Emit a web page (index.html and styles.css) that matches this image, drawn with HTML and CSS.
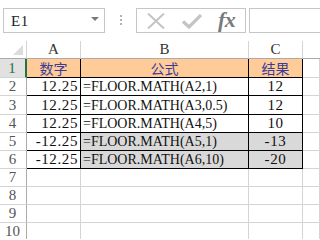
FILE: index.html
```html
<!DOCTYPE html>
<html lang="zh">
<head>
<meta charset="utf-8">
<link rel="stylesheet" href="styles.css">
</head>
<body>
<div class="toolbar">
  <div class="namebox"><span class="nb-text">E1</span><span class="caret"></span></div>
  <div class="dots"><i></i><i></i><i></i></div>
  <div class="fxbox">
    <svg class="ico-x" width="18" height="16" viewBox="0 0 18 16"><path d="M1 0.5 L17 15.5 M17 0.5 L1 15.5" stroke="#c4c4c4" stroke-width="2" fill="none"/></svg>
    <svg class="ico-check" width="20" height="15" viewBox="0 0 20 15"><path d="M1 7.5 L7 13 L19 1" stroke="#c4c4c4" stroke-width="3.2" fill="none"/></svg>
    <span class="fx">fx</span>
  </div>
  <div class="formula"></div>
</div>
<div class="sheet">
  <div class="corner"><span class="tri"></span></div>
  <div class="ch">A</div>
  <div class="ch">B</div>
  <div class="ch">C</div>
  <div class="ch last"></div>

  <div class="rh sel">1</div>
  <div class="d head">数字</div>
  <div class="d head">公式</div>
  <div class="d head">结果</div>
  <div class="e"></div>

  <div class="rh">2</div>
  <div class="d num">12.25</div>
  <div class="d fm">=FLOOR.MATH(A2,1)</div>
  <div class="d ctr">12</div>
  <div class="e"></div>

  <div class="rh">3</div>
  <div class="d num">12.25</div>
  <div class="d fm">=FLOOR.MATH(A3,0.5)</div>
  <div class="d ctr">12</div>
  <div class="e"></div>

  <div class="rh">4</div>
  <div class="d num">12.25</div>
  <div class="d fm">=FLOOR.MATH(A4,5)</div>
  <div class="d ctr">10</div>
  <div class="e"></div>

  <div class="rh">5</div>
  <div class="d num">-12.25</div>
  <div class="d fm gray">=FLOOR.MATH(A5,1)</div>
  <div class="d ctr gray">-13</div>
  <div class="e"></div>

  <div class="rh">6</div>
  <div class="d num">-12.25</div>
  <div class="d fm gray">=FLOOR.MATH(A6,10)</div>
  <div class="d ctr gray">-20</div>
  <div class="e"></div>

  <div class="rh">7</div><div class="e"></div><div class="e"></div><div class="e"></div><div class="e"></div>
  <div class="rh">8</div><div class="e"></div><div class="e"></div><div class="e"></div><div class="e"></div>
  <div class="rh">9</div><div class="e"></div><div class="e"></div><div class="e"></div><div class="e"></div>
  <div class="rh">10</div><div class="e"></div><div class="e"></div><div class="e"></div><div class="e"></div>
</div>
</body>
</html>
```
FILE: styles.css
```css
html, body {
  margin: 0;
  padding: 0;
  background: #fff;
  overflow: hidden;
}
body {
  width: 320px;
  height: 239px;
  font-family: "Liberation Serif", "Noto Sans CJK SC", serif;
}
.toolbar {
  height: 41px;
  box-sizing: border-box;
  padding-top: 8px;
  display: flex;
  align-items: flex-start;
}
.namebox {
  margin-left: 3px;
  width: 102px;
  height: 25px;
  box-sizing: border-box;
  border: 1px solid #c6c6c6;
  display: flex;
  align-items: center;
  justify-content: space-between;
  padding: 0 5px 0 7px;
}
.nb-text {
  font-size: 15px;
  letter-spacing: 0.6px;
  color: #222;
  padding-top: 1px;
}
.caret {
  width: 0;
  height: 0;
  border-left: 4px solid transparent;
  border-right: 4px solid transparent;
  border-top: 4px solid #7a7a7a;
  margin-top: -3px;
}
.dots {
  width: 2px;
  margin-left: 15px;
  margin-right: 14px;
  padding-top: 7px;
  display: flex;
  flex-direction: column;
  gap: 2px;
}
.dots i {
  display: block;
  width: 2px;
  height: 2px;
  background: #b4b4b4;
}
.fxbox {
  width: 110px;
  height: 25px;
  box-sizing: border-box;
  border: 1px solid #c6c6c6;
  display: flex;
  align-items: center;
  padding-left: 10px;
}
.ico-check { margin-left: 17px; margin-top: 2px; }
.fx {
  margin-left: 16px;
  font-family: "Liberation Serif", serif;
  font-style: italic;
  font-weight: bold;
  font-size: 22px;
  color: #7a7a7a;
  letter-spacing: -0.5px;
  line-height: 20px;
  margin-top: -2px;
}
.formula {
  margin-left: 3px;
  flex: 1;
  height: 25px;
  box-sizing: border-box;
  border: 1px solid #c6c6c6;
  border-right: none;
}
.sheet {
  display: grid;
  grid-template-columns: 27px 54px 168px 54px 1fr;
  grid-template-rows: 18px 19px 18px 19px 18px 18px 18px 18px 18px 18px 18px;
  font-size: 14px;
  line-height: 15px;
  color: #111;
}
.sheet > div {
  box-sizing: border-box;
  display: flex;
  align-items: flex-end;
  padding-bottom: 1px;
  white-space: nowrap;
  overflow: hidden;
}
.corner {
  border-right: 1px solid #d4d4d4;
  border-bottom: 1px solid #ababab;
  position: relative;
}
.tri {
  position: absolute;
  right: 3px;
  bottom: 3px;
  width: 0;
  height: 0;
  border-left: 10px solid transparent;
  border-bottom: 10px solid #dcdcdc;
}
.ch {
  border-right: 1px solid #d4d4d4;
  border-bottom: 1px solid #ababab;
  justify-content: center;
  color: #333;
  font-size: 15px;
}
.ch.last { border-right: none; }
.rh {
  border-right: 1px solid #ababab;
  border-bottom: 1px solid #d4d4d4;
  justify-content: center;
  color: #555;
  font-size: 15px;
  padding-right: 1px;
}
.rh.sel {
  background: #e1e1e1;
  color: #217346;
  border-right: 2px solid #217346;
}
.e {
  border-right: 1px solid #d4d4d4;
  border-bottom: 1px solid #d4d4d4;
}
.d {
  border-right: 1px solid #000;
  border-bottom: 1px solid #000;
}
.head {
  background: #ffcc99;
  justify-content: center;
  font-family: "Noto Sans CJK SC", sans-serif;
  color: #3c3c96;
  font-size: 14px;
  line-height: 16px;
}
.num {
  justify-content: flex-end;
  padding-right: 2px;
  font-size: 15px;
  letter-spacing: 0.6px;
}
.fm {
  padding-left: 2px;
  font-size: 14px;
  letter-spacing: 0;
}
.ctr {
  justify-content: center;
  font-size: 15px;
  letter-spacing: 0.6px;
}
.gray { background: #d9d9d9; }
```
